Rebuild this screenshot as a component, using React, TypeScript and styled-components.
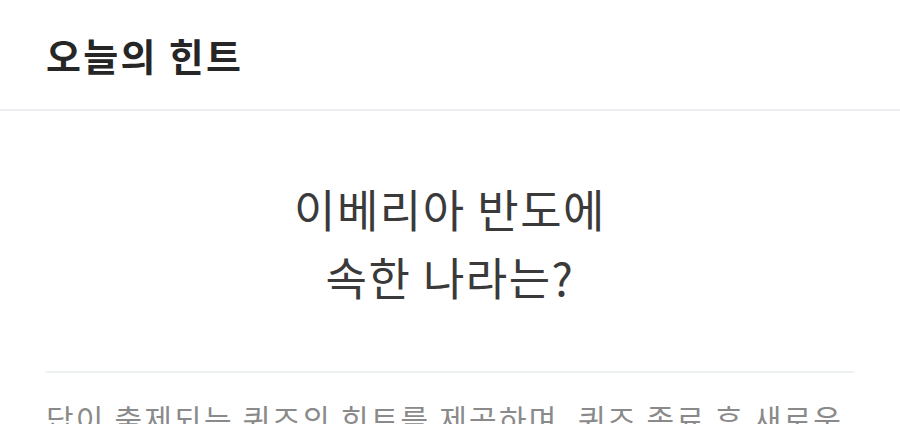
import React from "react";
import styled, { createGlobalStyle } from "styled-components";

const Global = createGlobalStyle`
  html, body { margin: 0; padding: 0; background: #ffffff; }
  body { font-family: "Noto Sans CJK KR", "Noto Sans", sans-serif; overflow: hidden; }
`;

const Page = styled.div`
  width: 900px;
  height: 424px;
  overflow: hidden;
  background: #ffffff;
  display: flex;
  flex-direction: column;
`;

const Header = styled.header`
  height: 111px;
  padding: 0 46px;
  display: flex;
  align-items: center;
  border-bottom: 2px solid #eceef2;
  box-sizing: border-box;
  flex-shrink: 0;
`;

const Title = styled.h1`
  margin: 0;
  font-size: 38px;
  font-weight: 700;
  color: #262626;
  letter-spacing: 2.3px;
`;

const Body = styled.main`
  padding: 0 46px;
  display: flex;
  flex-direction: column;
`;

const Question = styled.p`
  margin: 0;
  padding: 64px 0 60px;
  text-align: center;
  font-size: 45px;
  line-height: 68px;
  font-weight: 400;
  color: #3a3a3a;
  letter-spacing: 1.5px;
  border-bottom: 2px solid #eef1f1;
`;

const Description = styled.p`
  margin: 22px 0 0;
  font-size: 30px;
  line-height: 46px;
  color: #8a8a8a;
  letter-spacing: 2.2px;
  word-break: keep-all;
`;

export default function App() {
  return (
    <Page>
      <Global />
      <Header>
        <Title>오늘의 힌트</Title>
      </Header>
      <Body>
        <Question>
          이베리아 반도에
          <br />
          속한 나라는?
        </Question>
        <Description>
          답이 출제되는 퀴즈의 힌트를 제공하며, 퀴즈 종료 후 새로운 힌트가 공개됩니다.
        </Description>
      </Body>
    </Page>
  );
}
